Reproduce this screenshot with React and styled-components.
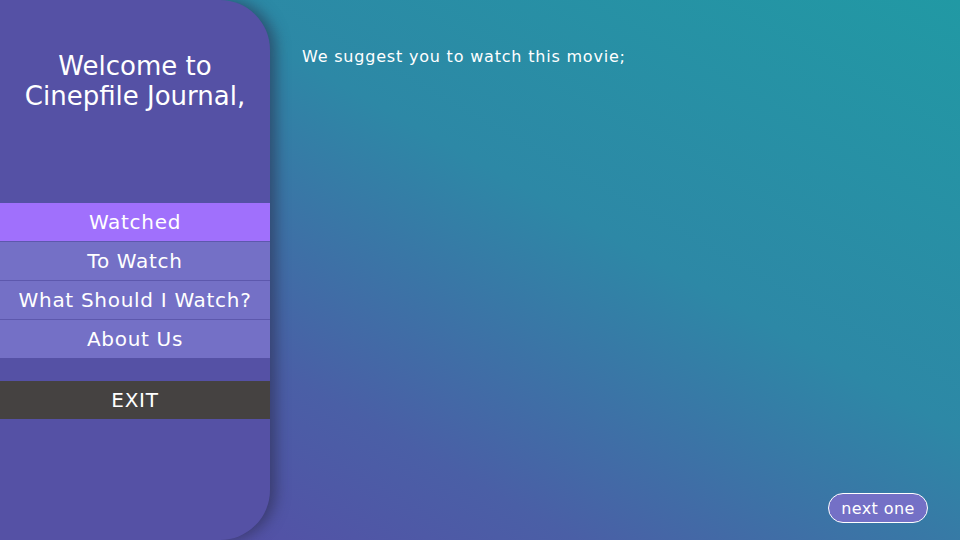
import React from 'react'
import styled, { createGlobalStyle } from 'styled-components'

const GlobalStyle = createGlobalStyle`
  html, body {
    margin: 0;
    padding: 0;
  }
  body {
    font-family: 'DejaVu Sans', 'Open Sans', sans-serif;
    color: #ffffff;
  }
`

const menu = ['Watched', 'To Watch', 'What Should I Watch?', 'About Us']

const App = () => {
  return (
    <Page>
      <GlobalStyle />
      <Sidebar>
        <Title>
          Welcome to
          <br />
          Cinepfile Journal,
        </Title>
        <Menu>
          {menu.map((item, i) => (
            <MenuItem key={item} active={i === 0}>
              {item}
            </MenuItem>
          ))}
        </Menu>
        <ExitButton>EXIT</ExitButton>
      </Sidebar>
      <Main>
        <Suggestion>We suggest you to watch this movie;</Suggestion>
        <Footer>
          <NextButton>next one</NextButton>
        </Footer>
      </Main>
    </Page>
  )
}

const Page = styled.div`
  width: 960px;
  height: 540px;
  display: flex;
  overflow: hidden;
  background: linear-gradient(to top right, #5a47a6 0%, #4a5fa6 30%, #2d88a6 60%, #2199a4 100%);
`

const Sidebar = styled.aside`
  width: 270px;
  flex-shrink: 0;
  height: 100%;
  background-color: #5551a5;
  border-radius: 0 50px 50px 0;
  box-shadow: 6px 0 14px rgba(40, 40, 70, 0.55);
  display: flex;
  flex-direction: column;
  position: relative;
  z-index: 1;
`

const Title = styled.h1`
  margin: 51px 0 0;
  font-size: 26px;
  font-weight: 400;
  line-height: 30px;
  text-align: center;
`

const Menu = styled.nav`
  margin-top: 92px;
  display: flex;
  flex-direction: column;
`

const MenuItem = styled.div`
  height: 38px;
  display: flex;
  align-items: center;
  justify-content: center;
  font-size: 20px;
  letter-spacing: 0.7px;
  background-color: ${(p) => (p.active ? '#a070fc' : '#7470c6')};
  border-bottom: 1px solid #5d58ad;
  &:last-child {
    border-bottom: none;
  }
`

const ExitButton = styled.div`
  margin-top: 23px;
  height: 38px;
  display: flex;
  align-items: center;
  justify-content: center;
  font-size: 20px;
  letter-spacing: 0.7px;
  background-color: #454241;
`

const Main = styled.main`
  flex: 1;
  display: flex;
  flex-direction: column;
  padding: 47px 32px 17px 32px;
`

const Suggestion = styled.p`
  margin: 0;
  font-size: 16px;
  letter-spacing: 0.8px;
`

const Footer = styled.div`
  margin-top: auto;
  display: flex;
  justify-content: flex-end;
`

const NextButton = styled.button`
  width: 100px;
  height: 30px;
  border: 1px solid #ffffff;
  border-radius: 15px;
  background-color: #7470c6;
  color: #ffffff;
  font-family: inherit;
  font-size: 16px;
  letter-spacing: 0.4px;
  padding: 0;
`

export default App
